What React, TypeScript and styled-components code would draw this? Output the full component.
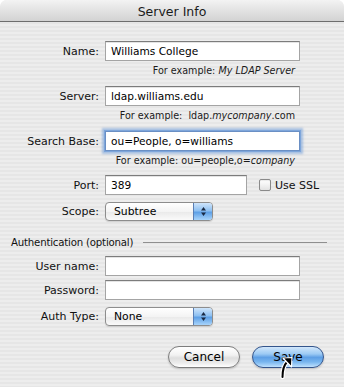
import styled, { createGlobalStyle } from 'styled-components';

const GlobalStyle = createGlobalStyle`
  html, body {
    margin: 0;
    padding: 0;
    background: #ffffff;
  }
  * {
    box-sizing: border-box;
  }
`;

const font = `'DejaVu Sans', 'Liberation Sans', sans-serif`;

const Window = styled.div`
  width: 344px;
  height: 387px;
  position: relative;
  display: flex;
  flex-direction: column;
  font-family: ${font};
  color: #111;
  border-radius: 7px 7px 0 0;
  overflow: hidden;
  background: repeating-linear-gradient(
    to bottom,
    #ededed 0px,
    #ededed 2px,
    #e6e6e6 2px,
    #e6e6e6 4px
  );
`;

const TitleBar = styled.div`
  height: 22px;
  flex: none;
  display: flex;
  align-items: center;
  justify-content: center;
  background: linear-gradient(to bottom, #f3f3f3 0%, #e4e4e4 45%, #d3d3d3 100%);
  border-bottom: 1px solid #6e6e6e;
  font-size: 12.5px;
  color: #1a1a1a;
  padding-top: 1px;
`;

const Form = styled.div`
  display: flex;
  flex-direction: column;
  padding: 19px 0 0 0;
`;

const Row = styled.div<{ $gap?: number }>`
  display: flex;
  align-items: center;
  height: 20px;
  margin-top: ${(p) => p.$gap ?? 0}px;
`;

const Label = styled.div`
  width: 99px;
  margin-right: 6px;
  text-align: right;
  font-size: 11px;
  color: #111;
  white-space: nowrap;
`;

const Field = styled.div<{ $width: number; $focused?: boolean }>`
  width: ${(p) => p.$width}px;
  height: 20px;
  background: #fff;
  border: 1px solid #a4a4a4;
  border-top-color: #7c7c7c;
  display: flex;
  align-items: center;
  padding-left: 5px;
  font-size: 10.6px;
  color: #000;
  white-space: nowrap;
  box-shadow: ${(p) =>
    p.$focused
      ? '0 0 0 1px #7ea6db, 0 0 2px 3px rgba(110, 155, 215, 0.55)'
      : 'inset 0 1px 0 #e4e4e4'};
  border-color: ${(p) => (p.$focused ? '#6a8fc4' : undefined)};
`;

const Hint = styled.div`
  margin-top: 3px;
  height: 14px;
  width: 295px;
  text-align: right;
  font-size: 9.6px;
  line-height: 14px;
  color: #1a1a1a;
  white-space: pre;
  & > i {
    font-style: italic;
  }
`;

const Check = styled.div`
  width: 12px;
  height: 12px;
  margin-left: 12px;
  border: 1px solid #8a8a8a;
  border-radius: 2px;
  background: linear-gradient(to bottom, #ffffff 0%, #f2f2f2 50%, #e2e2e2 100%);
  box-shadow: inset 0 1px 1px rgba(0, 0, 0, 0.08);
`;

const CheckLabel = styled.span`
  margin-left: 4px;
  font-size: 11px;
  color: #111;
`;

const Popup = styled.div`
  width: 108px;
  height: 19px;
  border: 1px solid #8d8d8d;
  border-radius: 4px;
  display: flex;
  align-items: stretch;
  overflow: hidden;
  background: linear-gradient(to bottom, #ffffff 0%, #f4f4f4 50%, #e9e9e9 51%, #fafafa 100%);
  box-shadow: 0 1px 1px rgba(0, 0, 0, 0.12);
`;

const PopupText = styled.div`
  flex: 1;
  display: flex;
  align-items: center;
  padding-left: 8px;
  font-size: 10.8px;
  color: #000;
`;

const PopupArrows = styled.div`
  width: 19px;
  border-left: 1px solid #5a7fb5;
  display: flex;
  align-items: center;
  justify-content: center;
  background: linear-gradient(to bottom, #cfe5fb 0%, #8ec0f1 45%, #5ea0e6 55%, #a8d4fb 100%);
`;

const Section = styled.div`
  display: flex;
  align-items: center;
  height: 14px;
  margin-top: 14px;
  padding: 0 17px 0 11px;
  color: #111;
`;

const SectionTitle = styled.span`
  width: 132px;
  flex: none;
  font-size: 10.2px;
  letter-spacing: -0.2px;
  white-space: nowrap;
`;

const Rule = styled.div`
  flex: 1;
  height: 1px;
  background: #8f8f8f;
`;

const Buttons = styled.div`
  display: flex;
  justify-content: flex-end;
  gap: 12px;
  margin-top: 20px;
  padding-right: 20px;
`;

const Button = styled.div<{ $primary?: boolean }>`
  width: 72px;
  height: 22px;
  border-radius: 11px;
  display: flex;
  align-items: center;
  justify-content: center;
  font-size: 12px;
  color: #000;
  border: 1px solid ${(p) => (p.$primary ? '#34558c' : '#7d7d7d')};
  background: ${(p) =>
    p.$primary
      ? 'linear-gradient(to bottom, #d2e7fb 0%, #9ccaf4 35%, #5e9fe5 52%, #79b6ef 75%, #bfe1fd 100%)'
      : 'linear-gradient(to bottom, #ffffff 0%, #f2f2f2 40%, #dedede 55%, #ececec 80%, #ffffff 100%)'};
  box-shadow: 0 1px 2px rgba(0, 0, 0, 0.2);
`;

const Cursor = styled.svg`
  position: absolute;
  left: 278px;
  top: 356px;
`;

const Arrows = () => (
  <svg width="7" height="11" viewBox="0 0 7 11">
    <path d="M3.5 1 L6 4.5 H1 Z" fill="#1a2a44" />
    <path d="M3.5 10 L6 6.5 H1 Z" fill="#1a2a44" />
  </svg>
);

const App = () => {
  return (
    <>
      <GlobalStyle />
      <Window>
        <TitleBar>Server Info</TitleBar>
        <Form>
          <Row>
            <Label>Name:</Label>
            <Field $width={195}>Williams College</Field>
          </Row>
          <Hint>
            For example: <i>My LDAP Server</i>
          </Hint>

          <Row $gap={8}>
            <Label>Server:</Label>
            <Field $width={195}>ldap.williams.edu</Field>
          </Row>
          <Hint>
            {'For example:  ldap.'}
            <i>mycompany</i>.com
          </Hint>

          <Row $gap={8}>
            <Label>Search Base:</Label>
            <Field $width={195} $focused>
              ou=People, o=williams
            </Field>
          </Row>
          <Hint>
            For example: ou=people,o=<i>company</i>
          </Hint>

          <Row $gap={7}>
            <Label>Port:</Label>
            <Field $width={142}>389</Field>
            <Check />
            <CheckLabel>Use SSL</CheckLabel>
          </Row>

          <Row $gap={6}>
            <Label>Scope:</Label>
            <Popup>
              <PopupText>Subtree</PopupText>
              <PopupArrows>
                <Arrows />
              </PopupArrows>
            </Popup>
          </Row>

          <Section>
            <SectionTitle>Authentication (optional)</SectionTitle>
            <Rule />
          </Section>

          <Row $gap={7}>
            <Label>User name:</Label>
            <Field $width={195} />
          </Row>
          <Row $gap={4}>
            <Label>Password:</Label>
            <Field $width={195} />
          </Row>
          <Row $gap={6}>
            <Label>Auth Type:</Label>
            <Popup>
              <PopupText>None</PopupText>
              <PopupArrows>
                <Arrows />
              </PopupArrows>
            </Popup>
          </Row>

          <Buttons>
            <Button>Cancel</Button>
            <Button $primary>Save</Button>
          </Buttons>
        </Form>
        <Cursor width="16" height="24" viewBox="0 0 16 24">
          <path
            d="M9 6 C6 9 4.5 13 4.5 21"
            fill="none"
            stroke="#fff"
            strokeWidth="4.5"
            strokeLinecap="round"
          />
          <path
            d="M9 6 C6 9 4.5 13 4.5 21"
            fill="none"
            stroke="#000"
            strokeWidth="2"
            strokeLinecap="round"
          />
          <path
            d="M5 2 L14 1.5 L13.5 11 Z"
            fill="#000"
            stroke="#fff"
            strokeWidth="1.2"
            strokeLinejoin="round"
          />
        </Cursor>
      </Window>
    </>
  );
};

export default App;
